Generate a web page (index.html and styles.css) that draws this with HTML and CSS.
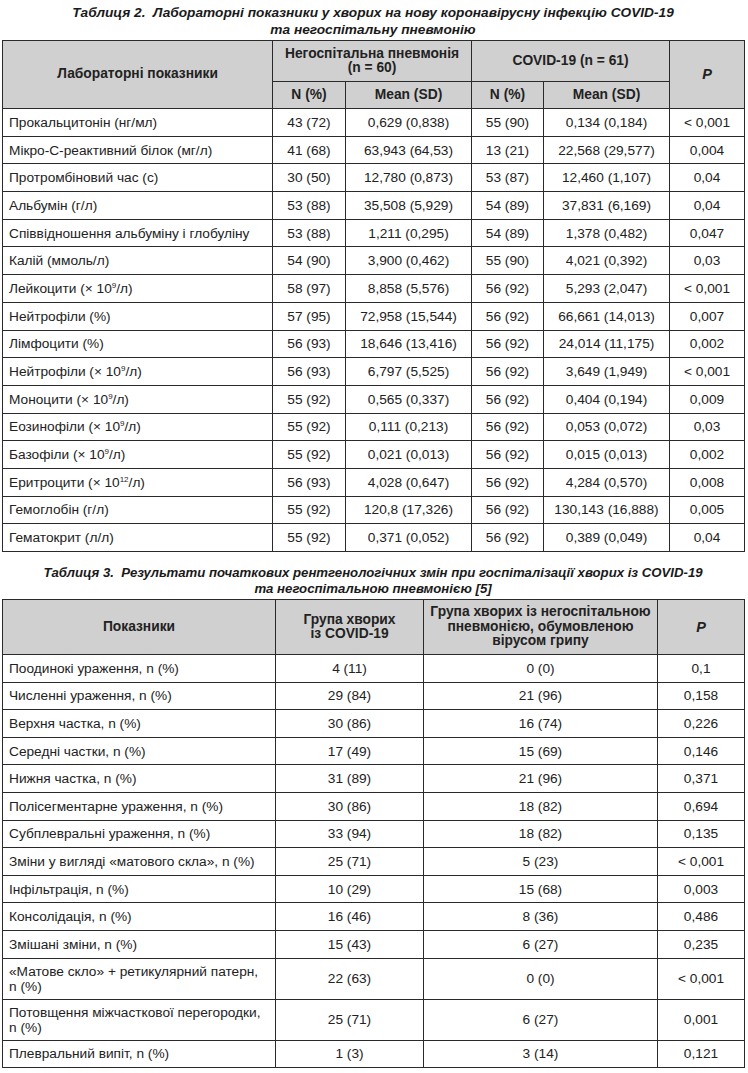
FILE: index.html
```html
<!DOCTYPE html>
<html lang="uk">
<head>
<meta charset="utf-8">
<title>Таблиці</title>
<link rel="stylesheet" href="styles.css">
</head>
<body>
<div class="page">
  <p class="caption">Таблиця 2.&nbsp; Лабораторні показники у хворих на нову коронавірусну інфекцію COVID-19<br>та негоспітальну пневмонію</p>
  <table class="t t2">
    <colgroup>
      <col class="c1"><col class="c2"><col class="c3"><col class="c4"><col class="c5"><col class="c6">
    </colgroup>
    <thead>
      <tr class="h1">
        <th rowspan="2">Лабораторні показники</th>
        <th colspan="2">Негоспітальна пневмонія<br>(n = 60)</th>
        <th colspan="2">COVID-19 (n = 61)</th>
        <th rowspan="2" class="pi">P</th>
      </tr>
      <tr class="h2">
        <th>N (%)</th><th>Mean (SD)</th><th>N (%)</th><th>Mean (SD)</th>
      </tr>
    </thead>
    <tbody>
      <tr><td>Прокальцитонін (нг/мл)</td><td>43 (72)</td><td>0,629 (0,838)</td><td>55 (90)</td><td>0,134 (0,184)</td><td>&lt; 0,001</td></tr>
      <tr><td>Мікро-С-реактивний білок (мг/л)</td><td>41 (68)</td><td>63,943 (64,53)</td><td>13 (21)</td><td>22,568 (29,577)</td><td>0,004</td></tr>
      <tr><td>Протромбіновий час (с)</td><td>30 (50)</td><td>12,780 (0,873)</td><td>53 (87)</td><td>12,460 (1,107)</td><td>0,04</td></tr>
      <tr><td>Альбумін (г/л)</td><td>53 (88)</td><td>35,508 (5,929)</td><td>54 (89)</td><td>37,831 (6,169)</td><td>0,04</td></tr>
      <tr><td>Співвідношення альбуміну і глобуліну</td><td>53 (88)</td><td>1,211 (0,295)</td><td>54 (89)</td><td>1,378 (0,482)</td><td>0,047</td></tr>
      <tr><td>Калій (ммоль/л)</td><td>54 (90)</td><td>3,900 (0,462)</td><td>55 (90)</td><td>4,021 (0,392)</td><td>0,03</td></tr>
      <tr><td>Лейкоцити (× 10<sup>9</sup>/л)</td><td>58 (97)</td><td>8,858 (5,576)</td><td>56 (92)</td><td>5,293 (2,047)</td><td>&lt; 0,001</td></tr>
      <tr><td>Нейтрофіли (%)</td><td>57 (95)</td><td>72,958 (15,544)</td><td>56 (92)</td><td>66,661 (14,013)</td><td>0,007</td></tr>
      <tr><td>Лімфоцити (%)</td><td>56 (93)</td><td>18,646 (13,416)</td><td>56 (92)</td><td>24,014 (11,175)</td><td>0,002</td></tr>
      <tr><td>Нейтрофіли (× 10<sup>9</sup>/л)</td><td>56 (93)</td><td>6,797 (5,525)</td><td>56 (92)</td><td>3,649 (1,949)</td><td>&lt; 0,001</td></tr>
      <tr><td>Моноцити (× 10<sup>9</sup>/л)</td><td>55 (92)</td><td>0,565 (0,337)</td><td>56 (92)</td><td>0,404 (0,194)</td><td>0,009</td></tr>
      <tr><td>Еозинофіли (× 10<sup>9</sup>/л)</td><td>55 (92)</td><td>0,111 (0,213)</td><td>56 (92)</td><td>0,053 (0,072)</td><td>0,03</td></tr>
      <tr><td>Базофіли (× 10<sup>9</sup>/л)</td><td>55 (92)</td><td>0,021 (0,013)</td><td>56 (92)</td><td>0,015 (0,013)</td><td>0,002</td></tr>
      <tr><td>Еритроцити (× 10<sup>12</sup>/л)</td><td>56 (93)</td><td>4,028 (0,647)</td><td>56 (92)</td><td>4,284 (0,570)</td><td>0,008</td></tr>
      <tr><td>Гемоглобін (г/л)</td><td>55 (92)</td><td>120,8 (17,326)</td><td>56 (92)</td><td>130,143 (16,888)</td><td>0,005</td></tr>
      <tr><td>Гематокрит (л/л)</td><td>55 (92)</td><td>0,371 (0,052)</td><td>56 (92)</td><td>0,389 (0,049)</td><td>0,04</td></tr>
    </tbody>
  </table>

  <p class="caption caption3">Таблиця 3.&nbsp; Результати початкових рентгенологічних змін при госпіталізації хворих із COVID-19<br>та негоспітальною пневмонією [5]</p>
  <table class="t t3">
    <colgroup>
      <col class="d1"><col class="d2"><col class="d3"><col class="d4">
    </colgroup>
    <thead>
      <tr class="h3">
        <th>Показники</th>
        <th>Група хворих<br>із COVID-19</th>
        <th>Група хворих із негоспітальною<br>пневмонією, обумовленою<br>вірусом грипу</th>
        <th class="pi">P</th>
      </tr>
    </thead>
    <tbody>
      <tr><td>Поодинокі ураження, n (%)</td><td>4 (11)</td><td>0 (0)</td><td>0,1</td></tr>
      <tr><td>Численні ураження, n (%)</td><td>29 (84)</td><td>21 (96)</td><td>0,158</td></tr>
      <tr><td>Верхня частка, n (%)</td><td>30 (86)</td><td>16 (74)</td><td>0,226</td></tr>
      <tr><td>Середні частки, n (%)</td><td>17 (49)</td><td>15 (69)</td><td>0,146</td></tr>
      <tr><td>Нижня частка, n (%)</td><td>31 (89)</td><td>21 (96)</td><td>0,371</td></tr>
      <tr><td>Полісегментарне ураження, n (%)</td><td>30 (86)</td><td>18 (82)</td><td>0,694</td></tr>
      <tr><td>Субплевральні ураження, n (%)</td><td>33 (94)</td><td>18 (82)</td><td>0,135</td></tr>
      <tr><td>Зміни у вигляді «матового скла», n (%)</td><td>25 (71)</td><td>5 (23)</td><td>&lt; 0,001</td></tr>
      <tr><td>Інфільтрація, n (%)</td><td>10 (29)</td><td>15 (68)</td><td>0,003</td></tr>
      <tr><td>Консолідація, n (%)</td><td>16 (46)</td><td>8 (36)</td><td>0,486</td></tr>
      <tr><td>Змішані зміни, n (%)</td><td>15 (43)</td><td>6 (27)</td><td>0,235</td></tr>
      <tr class="two"><td>«Матове скло» + ретикулярний патерн,<br>n (%)</td><td>22 (63)</td><td>0 (0)</td><td>&lt; 0,001</td></tr>
      <tr class="two"><td>Потовщення міжчасткової перегородки,<br>n (%)</td><td>25 (71)</td><td>6 (27)</td><td>0,001</td></tr>
      <tr><td>Плевральний випіт, n (%)</td><td>1 (3)</td><td>3 (14)</td><td>0,121</td></tr>
    </tbody>
  </table>
</div>
</body>
</html>
```

FILE: styles.css
```css
html, body {
  margin: 0;
  padding: 0;
  background: #ffffff;
}
body {
  font-family: "Liberation Sans", Arial, sans-serif;
  color: #1e1e1e;
}
.page {
  width: 742px;
  padding: 4px 0 0 2px;
}
.caption {
  margin: 0;
  height: 36px;
  text-align: center;
  font-weight: bold;
  font-style: italic;
  font-size: 13.7px;
  line-height: 17px;
  color: #1a1a1a;
}
.caption3 {
  height: 34px;
  margin-top: 13px;
  font-size: 13.2px;
  line-height: 15.5px;
}
.t {
  width: 742px;
  border-collapse: collapse;
  table-layout: fixed;
  font-size: 13.7px;
  border: 1.5px solid #2a2a2a;
}
.t th, .t td {
  border: 1.2px solid #2a2a2a;
  padding: 0;
  text-align: center;
  vertical-align: middle;
}
.t th {
  background: #d0d0d0;
  font-weight: bold;
  font-size: 13.8px;
  line-height: 14.5px;
  color: #222;
}
.t td {
  line-height: 15px;
  color: #222;
}
.t td:first-child {
  text-align: left;
  padding-left: 6px;
}
.t th.pi {
  font-style: italic;
  font-size: 14.5px;
}
sup {
  font-size: 8px;
  line-height: 0;
  vertical-align: 5px;
}
.c1 { width: 270px; }
.c2 { width: 73px; }
.c3 { width: 126px; }
.c4 { width: 72px; }
.c5 { width: 126px; }
.c6 { width: 75px; }
.t2 .h1 th { height: 40px; }
.t2 .h2 th { height: 26px; }
.t2 tbody td { height: 26.7px; }
.d1 { width: 273px; }
.d2 { width: 148px; }
.d3 { width: 234px; }
.d4 { width: 87px; }
.t3 .h3 th { height: 54px; }
.t3 tbody td { height: 26.6px; }
.t3 tbody tr.two td { height: 40px; }
```
